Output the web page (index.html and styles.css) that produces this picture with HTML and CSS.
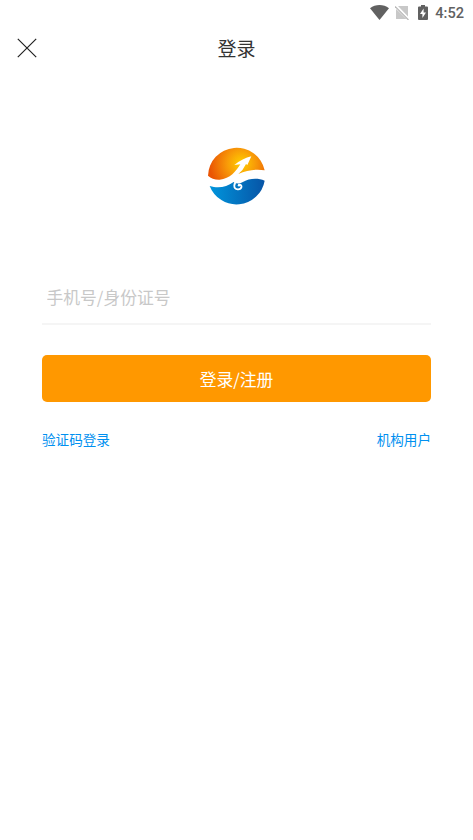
FILE: index.html
```html
<!DOCTYPE html>
<html lang="zh-CN">

<head>
  <meta charset="utf-8">
  <title>登录</title>
  <link rel="stylesheet" href="styles.css">
</head>

<body>
  <div class="status-bar">
    <svg class="wifi" width="19" height="15" viewBox="0 0 19 15">
      <path d="M0 3.2C5.5-1 13.5-1 19 3.2L9.5 15z" fill="#616161" />
    </svg>
    <svg class="signal" width="14" height="14" viewBox="0 0 14 14">
      <path d="M3 0h10v10.500zM1 3l10.500 10H1z" fill="#c8c8c8" />
      <path d="M0 .5L13.500 14" stroke="#b8b8b8" stroke-width="1.200" />
    </svg>
    <svg class="battery" width="10" height="15" viewBox="0 0 10 15">
      <path d="M3 0h4v1.500h2q1 0 1 1V14q0 1-1 1H1q-1 0-1-1V2.500q0-1 1-1h2z" fill="#616161" />
      <path d="M5.600 3.500L2 9h2.400v4L8 7.500H5.600z" fill="#fff" />
    </svg>
    <span class="clock">4:52</span>
  </div>
  <div class="header">
    <svg class="close" width="20" height="20" viewBox="0 0 20 20">
      <path d="M.8.800l18.400 18.400M19.200.800L.8 19.200" stroke="#222" stroke-width="1.200" />
    </svg>
    <h1 class="title">登录</h1>
    <span></span>
  </div>
  <div class="login">
    <svg class="logo" width="57" height="57" viewBox="24 23 171 171">
      <defs>
        <radialGradient id="sun" gradientUnits="userSpaceOnUse" cx="124" cy="66" r="95">
          <stop offset="0" stop-color="#ffd000" />
          <stop offset=".45" stop-color="#f89a08" />
          <stop offset="1" stop-color="#ea5504" />
        </radialGradient>
        <linearGradient id="sea" x1="0" x2="1">
          <stop offset="0" stop-color="#0095dc" />
          <stop offset="1" stop-color="#0754a6" />
        </linearGradient>
      </defs>
      <path d="M24 103A86 86 0 0 1 194 87C168 82 141 87 115 98Q130 86 138 68L142 71L154 45Q128 51 103 71L121 69C109 89 90 113 59 115Q38 116 24 103z" fill="url(#sun)" />
      <path d="M29 134C58 143 79 136 101 122Q114 131 127 123C149 110 174 110 194 118A86 86 0 0 1 29 134z" fill="url(#sea)" />
      <path d="M113 118C100 124 99 143 113 144C126 145 129 129 117 130" fill="none" stroke="#fff" stroke-width="5.500" stroke-linecap="round" />
      <circle cx="117" cy="132" r="3.500" fill="#fff" />
    </svg>
    <input class="account" type="text" placeholder="手机号/身份证号">
    <button class="submit">登录/注册</button>
    <div class="links">
      <a class="link">验证码登录</a>
      <a class="link">机构用户</a>
    </div>
  </div>
</body>

</html>
```

FILE: styles.css
```css
body {
  margin: 0;
  background-color: #fff;
  font-family: "Noto Sans CJK SC", sans-serif;
}

.status-bar {
  display: flex;
  justify-content: flex-end;
  align-items: center;
  height: 25px;
  padding-right: 9px;
}

.signal {
  margin-left: 6px;
}

.battery {
  margin-left: 9px;
}

.clock {
  margin-left: 7px;
  font: 500 14.6px Roboto, sans-serif;
  line-height: 26px;
  color: #616161;
}

.header {
  display: grid;
  grid-template-columns: 1fr auto 1fr;
  align-items: center;
  height: 44px;
  padding: 0 17px;
}

.title {
  margin: 0;
  font-size: 19px;
  font-weight: 400;
  color: #333;
}

.close {
  margin-top: 1px;
}

.login {
  display: flex;
  flex-direction: column;
  padding: 80px 42px 0;
}

.logo {
  align-self: center;
  overflow: visible;
}

.account {
  height: 52px;
  margin-top: 63px;
  padding: 2px 4.5px 0;
  border: 0;
  border-bottom: 2px solid #f5f5f5;
  outline: 0;
  font-family: inherit;
  font-size: 16.8px;
}

.account::placeholder {
  color: #c8c8c8;
}

.submit {
  height: 47px;
  margin-top: 30px;
  border: 0;
  border-radius: 5px;
  background-color: #ff9800;
  font-family: inherit;
  font-size: 16.8px;
  color: #fff;
}

.links {
  display: flex;
  justify-content: space-between;
  margin-top: 27px;
}

.link {
  font-size: 13.6px;
  line-height: 20px;
  color: #0090f0;
}
```
